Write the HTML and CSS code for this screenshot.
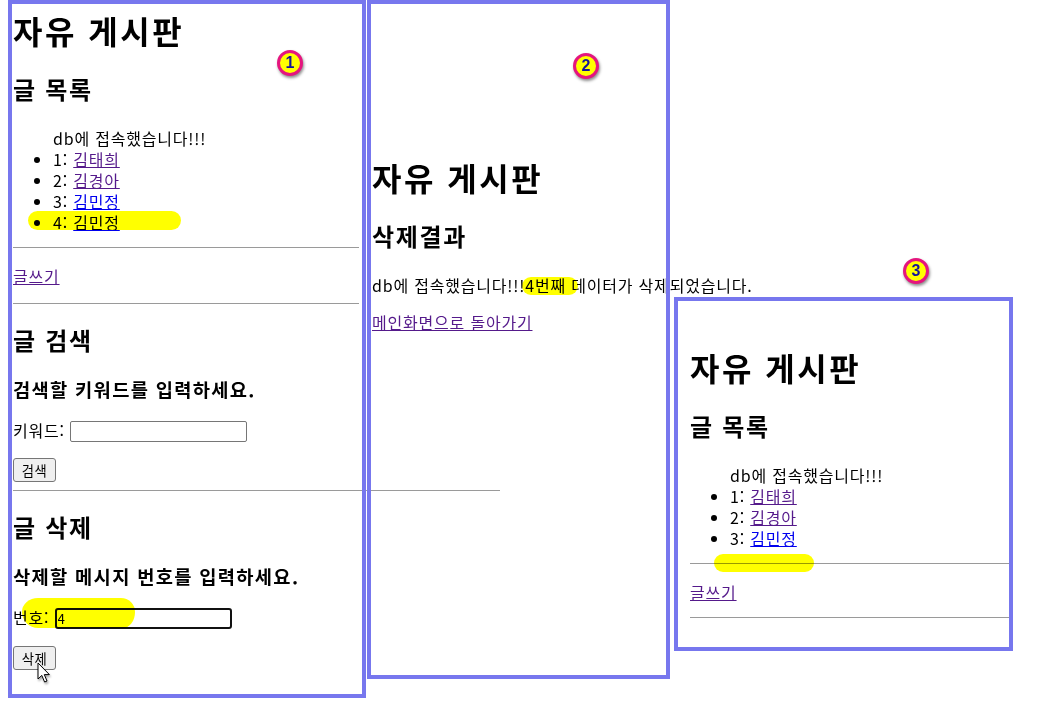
FILE: index.html
```html
<!DOCTYPE html>
<html lang="ko">
<head>
<meta charset="utf-8">
<title>자유 게시판</title>
<link rel="stylesheet" href="styles.css">
</head>
<body>
<div class="desk">

  <section class="win w1">
    <div class="page">
      <h1>자유 게시판</h1>
      <h2>글 목록</h2>
      <ul>
        db에 접속했습니다!!!
        <li>1: <a class="visited" href="#">김태희</a></li>
        <li>2: <a class="visited" href="#">김경아</a></li>
        <li>3: <a class="link" href="#">김민정</a></li>
        <li>4: <a class="link" href="#">김민정</a></li>
      </ul>
      <hr>
      <p class="write"><a class="visited" href="#">글쓰기</a></p>
      <hr>
      <h2>글 검색</h2>
      <h3>검색할 키워드를 입력하세요.</h3>
      <form class="form">
        <p class="row">키워드: <input class="field" type="text"></p>
        <button class="btn" type="button">검색</button>
      </form>
      <hr class="wide">
      <h2>글 삭제</h2>
      <h3>삭제할 메시지 번호를 입력하세요.</h3>
      <form class="form del">
        <p class="row">번호: <input class="field focus" type="text" value="4"></p>
        <button class="btn" type="button">삭제</button>
      </form>
    </div>
  </section>

  <section class="win w2">
    <div class="page">
      <h1>자유 게시판</h1>
      <h2>삭제결과</h2>
      <p class="nowrap">db에 접속했습니다!!!4번째 데이터가 삭제되었습니다.</p>
      <p><a class="visited" href="#">메인화면으로 돌아가기</a></p>
    </div>
  </section>

  <section class="win w3">
    <div class="page">
      <h1>자유 게시판</h1>
      <h2>글 목록</h2>
      <ul>
        db에 접속했습니다!!!
        <li>1: <a class="visited" href="#">김태희</a></li>
        <li>2: <a class="visited" href="#">김경아</a></li>
        <li>3: <a class="link" href="#">김민정</a></li>
      </ul>
      <hr>
      <p class="write"><a class="visited" href="#">글쓰기</a></p>
      <hr>
    </div>
  </section>

  <span class="mark m1"></span>
  <span class="mark m2"></span>
  <span class="mark m3"></span>
  <span class="mark m4"></span>

  <span class="badge b1">1</span>
  <span class="badge b2">2</span>
  <span class="badge b3">3</span>

  <svg class="cursor" width="14" height="22" viewBox="0 0 14 22">
    <path d="M1 1 L1 17 L4.8 13.4 L7.6 20 L10 19 L7.3 12.6 L12.4 12.6 Z" fill="#fff" stroke="#000" stroke-width="1" stroke-linejoin="round"/>
  </svg>
</div>
</body>
</html>
```

FILE: styles.css
```css
html, body {
  margin: 0;
  padding: 0;
  background: #fff;
}

.desk {
  position: relative;
  width: 1047px;
  height: 720px;
  background: #fff;
  overflow: hidden;
  isolation: isolate;
  font-family: "Noto Sans CJK KR", "Noto Sans", sans-serif;
  font-size: 16px;
  line-height: 21px;
  letter-spacing: 0.05em;
  color: #000;
}

.win {
  position: absolute;
  box-sizing: border-box;
}

.win::after {
  content: "";
  position: absolute;
  inset: 0;
  border: 4px solid #7777ee;
  pointer-events: none;
  z-index: 2;
}

.w1 { left: 8px; top: 0; width: 358px; height: 698px; }
.w2 { left: 367px; top: 0; width: 303px; height: 679px; }
.w3 { left: 674px; top: 297px; width: 339px; height: 354px; }

.page { display: flow-root; }
.w1 .page { padding: 9px 7px 0 5px; }
.w2 .page { padding: 156px 0 0 5px; }
.w3 .page { padding: 49px 2px 0 16px; }

h1 {
  font-size: 32px;
  line-height: 42px;
  font-weight: 700;
  letter-spacing: 0.078em;
  margin: 0 0 22px;
}

h2 {
  font-size: 24px;
  line-height: 32px;
  font-weight: 700;
  letter-spacing: 0.07em;
  margin: 20px 0;
}

h3 {
  font-size: 18.72px;
  line-height: 25px;
  font-weight: 700;
  letter-spacing: 0.07em;
  margin: 19px 0;
}

p { margin: 16px 0; }

ul {
  margin: 16px 0 14px;
  padding-left: 40px;
}

h2 + ul,
h2 + p { margin-top: 23px; }

.write { margin: 18px 0 14px; }
.w1 .write { margin-bottom: 16px; }

hr {
  border: 0;
  border-top: 1px solid #9a9a9a;
  height: 0;
  margin: 8px 0;
}

hr.wide { width: 487px; }

a { text-decoration: underline; }
a.visited { color: #551a8b; }
a.link { color: #0000ee; }

.nowrap { white-space: nowrap; }

.form { margin: 0; }
.row { margin: 0 0 16px; }
.del .row { margin: 2px 0 17px; }

.field {
  box-sizing: border-box;
  width: 177px;
  height: 21px;
  padding: 1px 2px;
  border: 1px solid #767676;
  border-radius: 2px;
  font-family: "Noto Sans CJK KR", sans-serif;
  font-size: 13.33px;
  line-height: 17px;
  letter-spacing: 0;
  vertical-align: baseline;
  background: #fff;
  color: #000;
}

.field.focus {
  border: 2px solid #111;
  border-radius: 3px;
  padding: 0 1px;
}

.btn {
  box-sizing: border-box;
  width: 43px;
  height: 24px;
  padding: 0 6px;
  border: 1px solid #767676;
  border-radius: 3px;
  background: #efefef;
  font-family: "Noto Sans CJK KR", sans-serif;
  font-size: 13.33px;
  letter-spacing: 0.04em;
  color: #000;
}

.mark {
  position: absolute;
  background: #ffff00;
  mix-blend-mode: multiply;
  z-index: 3;
}
.m1 { left: 28px; top: 211px; width: 153px; height: 19px; border-radius: 10px; }
.m2 { left: 22px; top: 598px; width: 113px; height: 30px; border-radius: 16px 14px 12px 16px / 14px 14px 16px 16px; }
.m3 { left: 522px; top: 277px; width: 56px; height: 18px; border-radius: 9px; }
.m4 { left: 714px; top: 554px; width: 100px; height: 18px; border-radius: 9px; }

.badge {
  position: absolute;
  box-sizing: border-box;
  width: 26px;
  height: 26px;
  border-radius: 50%;
  border: 3px solid #e5157e;
  background: #ffff00;
  box-shadow: 1px 2px 3px rgba(0, 0, 0, 0.45);
  color: #13139a;
  font-family: "Liberation Sans", Arial, sans-serif;
  font-weight: 700;
  font-size: 16px;
  line-height: 20px;
  letter-spacing: 0;
  text-align: center;
  z-index: 4;
}
.b1 { left: 277px; top: 50px; }
.b2 { left: 573px; top: 53px; }
.b3 { left: 903px; top: 258px; }

.cursor {
  position: absolute;
  left: 37px;
  top: 662px;
  z-index: 5;
  filter: drop-shadow(1px 2px 1px rgba(0, 0, 0, 0.35));
}
```
